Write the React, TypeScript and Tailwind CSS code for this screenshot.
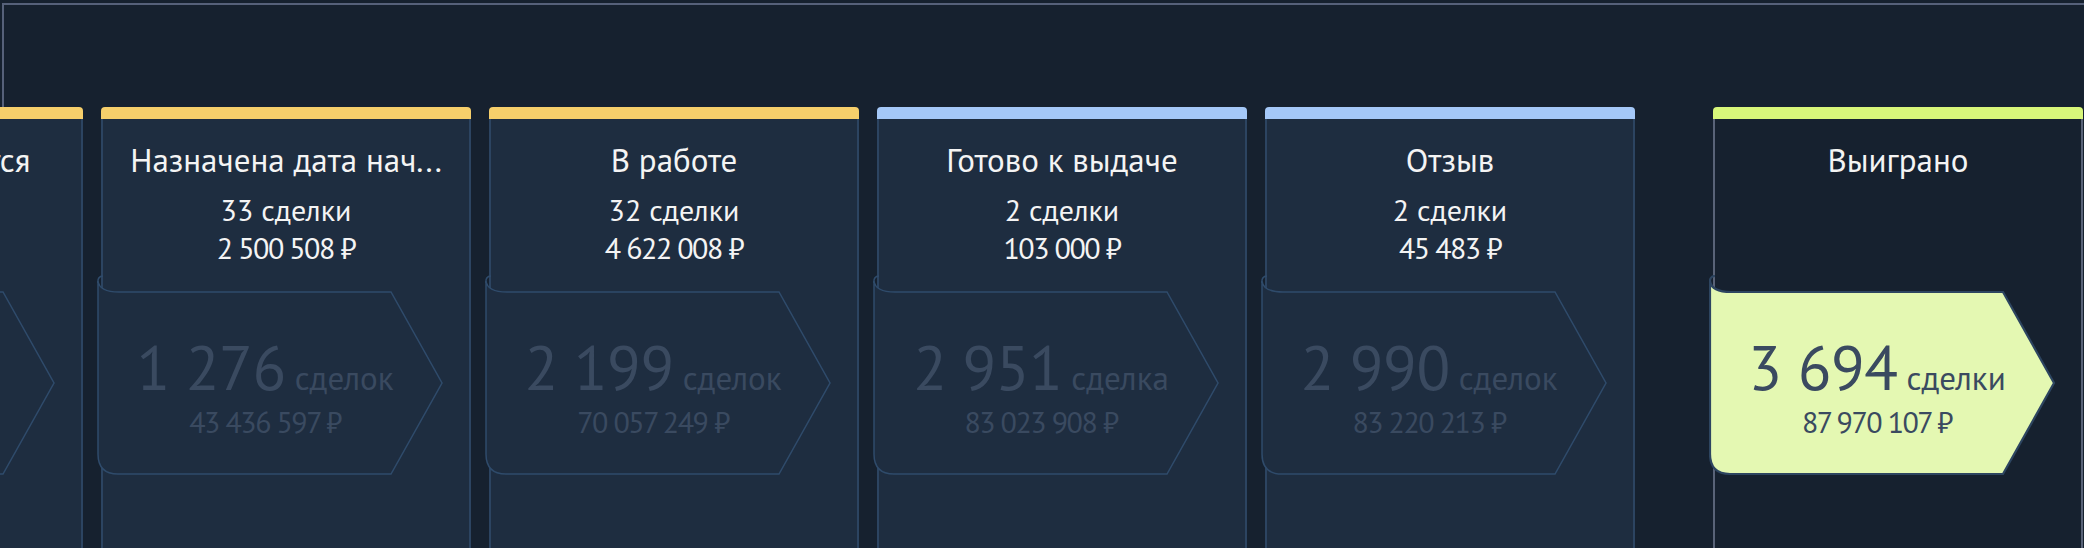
import React from 'react';

type Stage = {
  title: string;
  bar: string;
  deals?: string;
  sum?: string;
  total: string;
  word: string;
  totalSum: string;
  won?: boolean;
};

const stages: Stage[] = [
  { title: 'Замер согласуется', bar: 'bg-[#f6cf6b]', deals: '41 сделка', sum: '3 118 400 ₽', total: '845', word: 'сделок', totalSum: '27 305 112 ₽' },
  { title: 'Назначена дата нач...', bar: 'bg-[#f6cf6b]', deals: '33 сделки', sum: '2 500 508 ₽', total: '1 276', word: 'сделок', totalSum: '43 436 597 ₽' },
  { title: 'В работе', bar: 'bg-[#f6cf6b]', deals: '32 сделки', sum: '4 622 008 ₽', total: '2 199', word: 'сделок', totalSum: '70 057 249 ₽' },
  { title: 'Готово к выдаче', bar: 'bg-[#a4c8f8]', deals: '2 сделки', sum: '103 000 ₽', total: '2 951', word: 'сделка', totalSum: '83 023 908 ₽' },
  { title: 'Отзыв', bar: 'bg-[#a4c8f8]', deals: '2 сделки', sum: '45 483 ₽', total: '2 990', word: 'сделок', totalSum: '83 220 213 ₽' },
];

const won: Stage = { title: 'Выиграно', bar: 'bg-[#d8f77a]', total: '3 694', word: 'сделки', totalSum: '87 970 107 ₽', won: true };

const Arrow = ({ stage }: { stage: Stage }) => {
  const fill = stage.won ? '#e4f8b2' : '#1e2d40';
  const stroke = stage.won ? '#2d4560' : '#2f4b6b';
  const sw = stage.won ? 2.2 : 1.5;
  return (
    <div className="relative -ml-[6px] w-[350px] h-[202px] shrink-0">
      <svg className="absolute inset-0" width="350" height="202" viewBox="0 0 350 202" fill="none">
        <path
          d="M1 6 C2 14 10 17 22 17 L294 17 L345 108 L294 199 L21 199 Q1 199 1 179 Z"
          fill={fill}
          stroke={stroke}
          strokeWidth={sw}
        />
        <path d="M1 8 C0.5 4 2 1 6 1" stroke={stroke} strokeWidth={sw} />
      </svg>
      <div className="relative flex h-full flex-col items-center justify-center pt-[23px] pr-[14px] text-[#3a4a60]">
        <div className="flex items-baseline gap-[9px] whitespace-nowrap leading-none">
          <span className="text-[62px] leading-[62px] tracking-[-0.5px]">{stage.total}</span>
          <span className="text-[33px]">{stage.word}</span>
        </div>
        <div className="mt-[6px] whitespace-nowrap text-[30px] leading-[36px] tracking-[-1.5px]">{stage.totalSum}</div>
      </div>
    </div>
  );
};

const Card = ({ stage }: { stage: Stage }) => (
  <div className="flex h-[445px] w-[370px] shrink-0 flex-col">
    <div className={`h-[12px] rounded-t-[4px] ${stage.bar}`} />
    <div
      className={`flex flex-1 flex-col rounded-b-[4px] border-x-2 border-b-2 ${
        stage.won ? 'border-[#596378] bg-[#16212f]' : 'border-[#2c4461] bg-[#1e2d40]'
      }`}
    >
      <div className="flex h-[156px] flex-col items-center pt-[21px] text-[#f4f4f4]">
        <div className="whitespace-nowrap text-[33px] leading-[40px]">{stage.title}</div>
        {stage.deals && (
          <>
            <div className="mt-[11px] whitespace-nowrap text-[30px] leading-[38px]">{stage.deals}</div>
            <div className="whitespace-nowrap text-[30px] leading-[38px] tracking-[-1.5px]">{stage.sum}</div>
          </>
        )}
      </div>
      <Arrow stage={stage} />
    </div>
  </div>
);

export default function App() {
  return (
    <div
      className="h-[548px] w-full overflow-hidden bg-[#16212f] pl-[2px] pt-[3px]"
      style={{ fontFamily: '"PT Sans", Lato, "Noto Sans", sans-serif' }}
    >
      <div className="h-[600px] w-[2200px] border-l-2 border-t-2 border-[#56617a] pt-[102px]">
        <div className="-ml-[291px] flex">
          <div className="flex gap-[18px]">
            {stages.map((s, i) => (
              <Card key={i} stage={s} />
            ))}
          </div>
          <div className="ml-[78px]">
            <Card stage={won} />
          </div>
        </div>
      </div>
    </div>
  );
}
